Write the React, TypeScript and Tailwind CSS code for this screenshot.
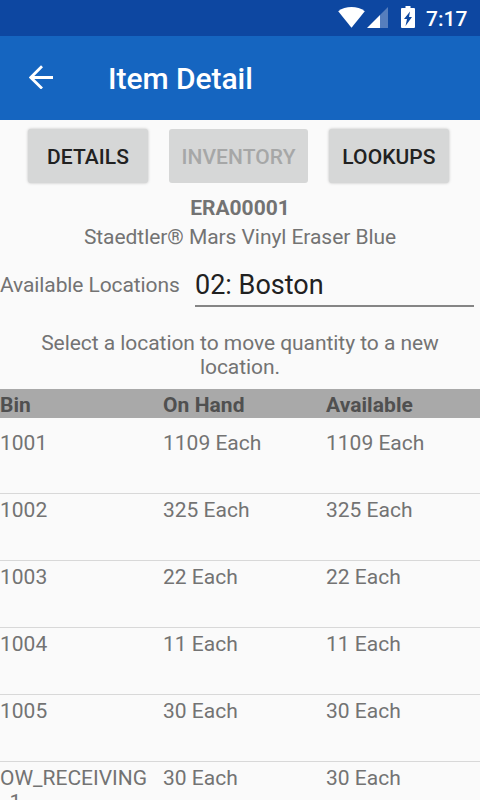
interface BinRow {
  bin: string;
  onHand: string;
  available: string;
}

const rows: BinRow[] = [
  { bin: "1001", onHand: "1109 Each", available: "1109 Each" },
  { bin: "1002", onHand: "325 Each", available: "325 Each" },
  { bin: "1003", onHand: "22 Each", available: "22 Each" },
  { bin: "1004", onHand: "11 Each", available: "11 Each" },
  { bin: "1005", onHand: "30 Each", available: "30 Each" },
  { bin: "OW_RECEIVING_1", onHand: "30 Each", available: "30 Each" },
];

const tabs = [
  { label: "DETAILS", disabled: false },
  { label: "INVENTORY", disabled: true },
  { label: "LOOKUPS", disabled: false },
];

function StatusBar() {
  return (
    <div className="h-9 bg-[#0d47a1] flex items-start justify-end pt-[6px] pr-[11px] text-white">
      <svg className="w-[27px] h-[21px] mt-px" viewBox="0 0 27 21" fill="currentColor">
        <path d="M13.5 20.7 0.200 4.200C4 1.300 8.500 0 13.500 0s9.500 1.300 13.300 4.200z" />
      </svg>
      <svg className="w-[21px] h-[21px] mt-px ml-[2px]" viewBox="0 0 21 21" fill="currentColor">
        <path d="M13 8 21 0v21h-8z" opacity=".3" />
        <path d="M0 21 13 8v13z" />
      </svg>
      <svg className="w-[14px] h-[22px] ml-[13px]" viewBox="0 0 14 22" fill="currentColor">
        <path fillRule="evenodd" d="M4.500 0h5v2h3.500q1 0 1 1v18q0 1-1 1h-12q-1 0-1-1v-18q0-1 1-1h3.500zM9 5.500 3 13h3L4.500 20l6.500-9H8z" />
      </svg>
      <span className="text-[21px] leading-[26px] font-medium ml-[11px] w-[43px] whitespace-nowrap">7:17</span>
    </div>
  );
}

export default function App() {
  return (
    <div className="w-[480px] h-[800px] overflow-hidden bg-[#fafafa] font-[Roboto,sans-serif] text-[21px] leading-[24px] text-[#737373]">
      <StatusBar />

      {/* App bar */}
      <div className="h-[84px] bg-[#1565c0] flex items-center text-white">
        <svg className="w-6 h-6 ml-[29px] mb-[2px]" viewBox="0 0 24 24" fill="none" stroke="currentColor" strokeWidth="2.800">
          <path d="M24 12.500H2.500M13 1.200 1.800 12.500 13 23.500" />
        </svg>
        <h1 className="ml-[55px] pt-[2px] text-[30px] font-medium tracking-[-0.04px]">Item Detail</h1>
      </div>

      {/* Tab buttons */}
      <div className="grid grid-cols-[120px_139px_120px] gap-[21px] pt-[9px] pl-7">
        {tabs.map((tab) => (
          <button
            key={tab.label}
            disabled={tab.disabled}
            className={`h-[54px] pt-[2px] rounded-[3px] bg-[#d6d7d7] font-medium tracking-[0.08px] ${
              tab.disabled ? "text-[#a6a7a7]" : "text-[#212121] shadow-[0_0_3px_rgba(0,0,0,0.25)]"
            }`}
          >
            {tab.label}
          </button>
        ))}
      </div>

      <div className="text-center mt-[13px] font-bold">ERA00001</div>
      <div className="text-center mt-[5px] tracking-[-0.06px]">Staedtler® Mars Vinyl Eraser Blue</div>

      {/* Location field */}
      <div className="flex items-center mt-[15px] h-[43px]">
        <span className="w-[195px] pb-px tracking-[-0.1px]">Available Locations</span>
        <div className="w-[279px] h-[43px] border-b-2 border-[#858585] text-[27px] leading-[42px] text-[#212121]">
          02: Boston
        </div>
      </div>

      <p className="mt-6 px-6 text-center tracking-[-0.05px]">
        Select a location to move quantity to a new location.
      </p>

      {/* Bin table */}
      <div className="mt-[10px] h-[29px] pt-[2px] bg-[#a9a9a9] grid grid-cols-[163px_163px_154px] items-center font-bold tracking-[0.06px] text-[#505050]">
        <span>Bin</span>
        <span>On Hand</span>
        <span>Available</span>
      </div>
      <div className="pt-[9px]">
        {rows.map((row) => (
          <div key={row.bin} className="h-[67px] pt-1 grid grid-cols-[163px_163px_154px] border-b border-[#d8d8d8]">
            <span className="pr-[10px] wrap-anywhere">{row.bin}</span>
            <span>{row.onHand}</span>
            <span>{row.available}</span>
          </div>
        ))}
      </div>
    </div>
  );
}
